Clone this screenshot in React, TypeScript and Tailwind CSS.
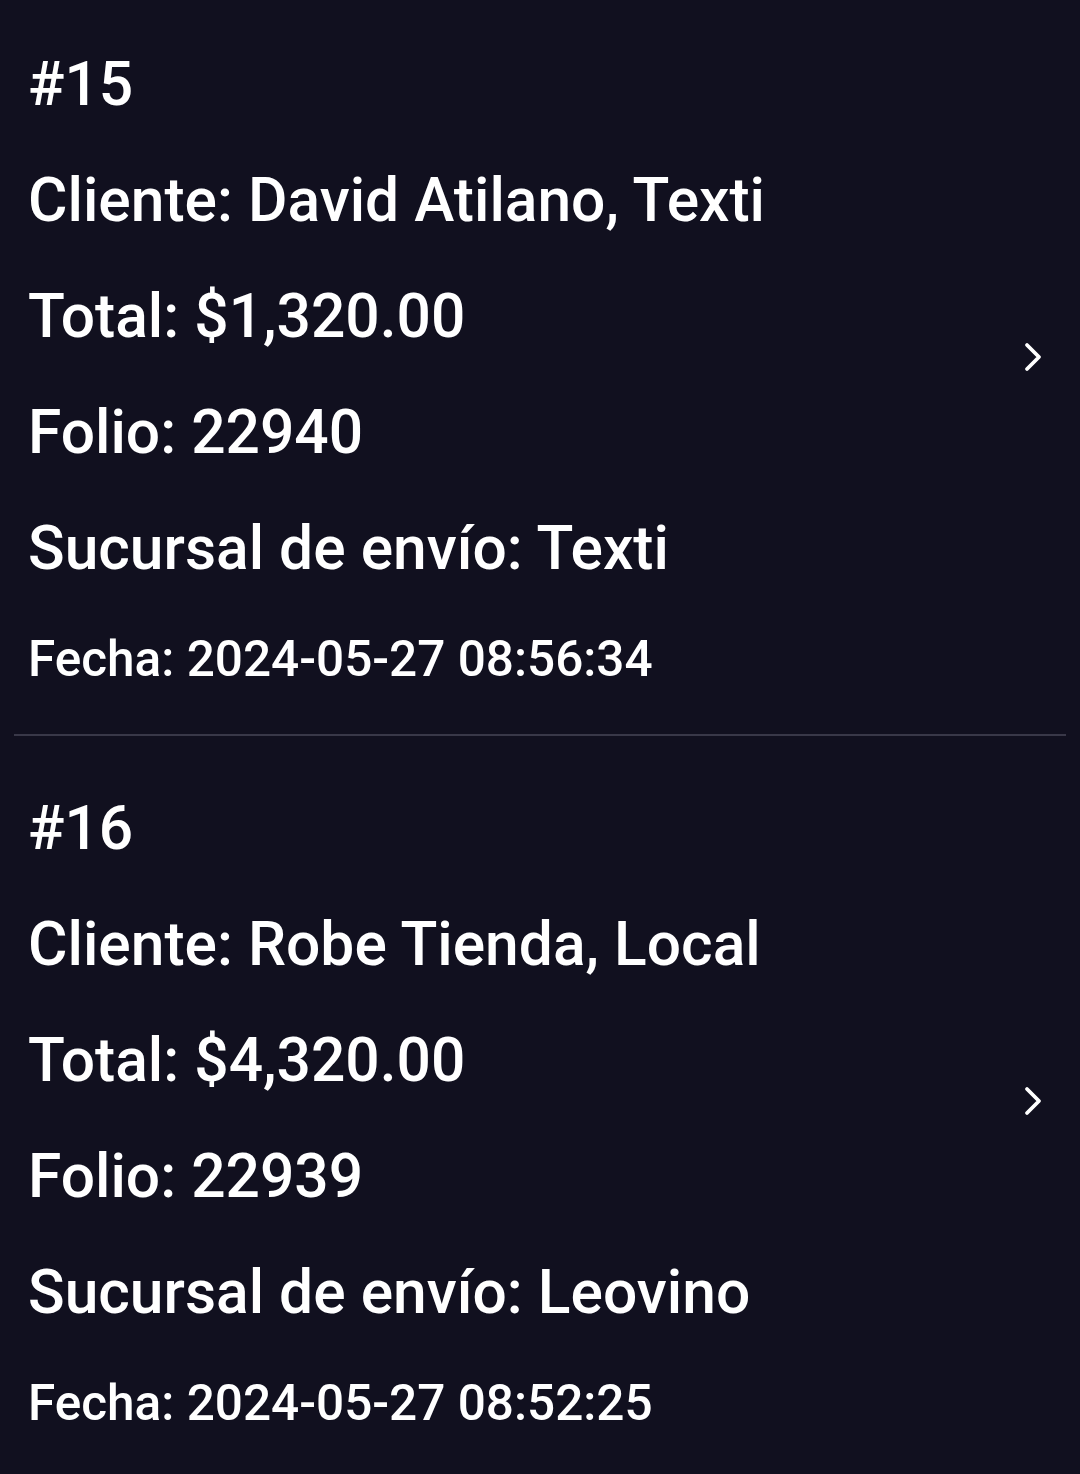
import React from "react";

type Order = {
  num: number;
  cliente: string;
  total: string;
  folio: string;
  sucursal: string;
  fecha: string;
};

const orders: Order[] = [
  {
    num: 15,
    cliente: "David Atilano, Texti",
    total: "$1,320.00",
    folio: "22940",
    sucursal: "Texti",
    fecha: "2024-05-27 08:56:34",
  },
  {
    num: 16,
    cliente: "Robe Tienda, Local",
    total: "$4,320.00",
    folio: "22939",
    sucursal: "Leovino",
    fecha: "2024-05-27 08:52:25",
  },
];

const Chevron = () => (
  <svg width="18" height="30" viewBox="0 0 18 30" fill="none">
    <polyline
      points="3,3 15,15 3,27"
      stroke="white"
      strokeWidth="3.8"
      strokeLinecap="round"
      strokeLinejoin="round"
    />
  </svg>
);

const OrderRow = ({ order }: { order: Order }) => (
  <div>
    <div className="flex items-center pt-[35px] pb-[23px] pl-[28px] pr-[38px]">
      <div className="flex-1 text-[60.5px] font-medium leading-[116px] text-white">
        <p>#{order.num}</p>
        <p>Cliente: {order.cliente}</p>
        <p>Total: {order.total}</p>
        <p>Folio: {order.folio}</p>
        <p>Sucursal de envío: {order.sucursal}</p>
        <p className="text-[49.5px] leading-[104px]">
          Fecha: {order.fecha}
        </p>
      </div>
      <div className="-mt-[24px]">
        <Chevron />
      </div>
    </div>
    <div className="mx-[14px] h-[2px] bg-[#393848]" />
  </div>
);

export default function App() {
  return (
    <div
      className="min-h-screen w-full overflow-hidden bg-[#11101f]"
      style={{ fontFamily: "Roboto, 'Liberation Sans', sans-serif" }}
    >
      <div className="-mt-[8px]">
        {orders.map((o) => (
          <OrderRow key={o.num} order={o} />
        ))}
      </div>
    </div>
  );
}
